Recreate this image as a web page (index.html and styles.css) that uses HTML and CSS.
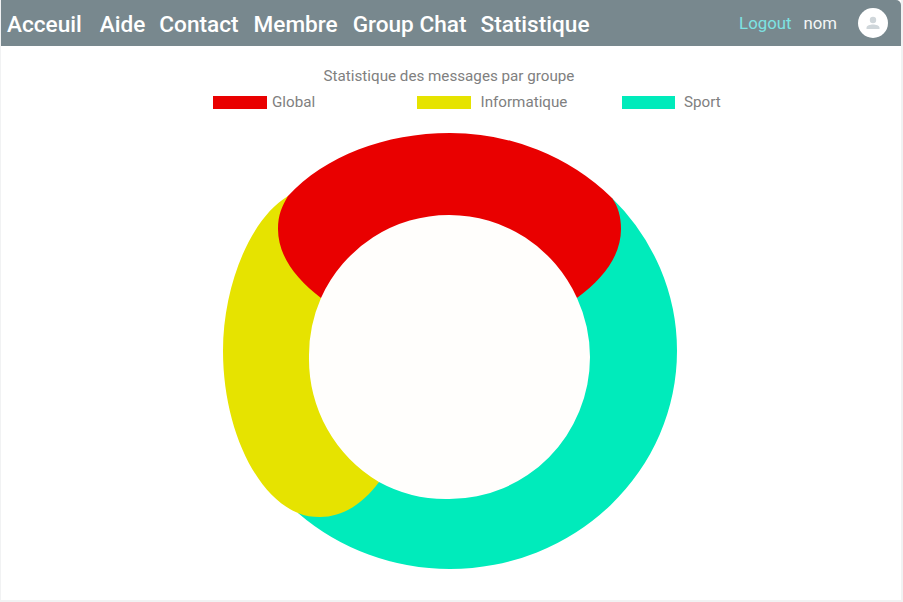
FILE: index.html
```html
<!doctype html>
<html>
<head>
  <meta charset="utf-8">
  <title>Statistique</title>
  <link rel="stylesheet" href="styles.css">
</head>
<body>
  <div class="page">
    <nav class="navbar">
      <a class="nav-link first" href="#">Acceuil</a>
      <a class="nav-link aide" href="#">Aide</a>
      <a class="nav-link" href="#">Contact</a>
      <a class="nav-link" href="#">Membre</a>
      <a class="nav-link chat" href="#">Group Chat</a>
      <a class="nav-link" href="#">Statistique</a>
      <div class="user">
        <a class="logout" href="#">Logout</a>
        <span class="name">nom</span>
        <span class="avatar">
          <svg width="16" height="16" viewBox="0 0 16 16">
            <circle cx="8" cy="5" r="3.2" fill="#cfd6da"/>
            <path d="M1.5 14v-1.2C1.5 10.6 5.2 9.6 8 9.6s6.5 1 6.5 3.2V14z" fill="#cfd6da"/>
          </svg>
        </span>
      </div>
    </nav>
    <main class="content">
      <h1 class="chart-title">Statistique des messages par groupe</h1>
      <ul class="legend">
        <li class="legend-item global"><span class="swatch red"></span>Global</li>
        <li class="legend-item info"><span class="swatch yellow"></span>Informatique</li>
        <li class="legend-item sport"><span class="swatch teal"></span>Sport</li>
      </ul>
      <svg class="donut" width="456" height="438" viewBox="222 131 456 438">
        <ellipse fill="#fffefc" cx="449.5" cy="356" rx="141" ry="142.5"/>
        <path fill="#00ebbb" d="M612 197A227 218 0 0 1 677 350A227 218 0 0 1 450 568A227 218 0 0 1 298 512L379 481A140.5 142 0 0 0 449.5 498A140.5 142 0 0 0 590 356A140.5 142 0 0 0 577 297Z"/>
        <path fill="#e6e300" d="M288 195C250 218 223 285 223 350C223 425 255 495 298 512C305 515 312 516 320 516C345 516 365 500 379 481A140.5 142 0 0 1 309 356A140.5 142 0 0 1 321 297Z"/>
        <path fill="#e90000" d="M288 195C325 155 385 132 450 132A227 218 0 0 1 612 197C618 205 621 216 621 228C621 255 603 278 577 297A140.5 142 0 0 0 449.5 214A140.5 142 0 0 0 321 297C296 278 278 255 278 228C278 214 282 205 288 195Z"/>
      </svg>
    </main>
  </div>
</body>
</html>
```

FILE: styles.css
```css
body {
  margin: 0;
  background: #f1f2f3;
  font-family: Roboto, "Liberation Sans", sans-serif;
}

.page {
  width: 900px;
  height: 600px;
  margin-left: 1px;
  background: #fff;
}

.navbar {
  display: flex;
  align-items: center;
  height: 46px;
  padding: 2px 13px 0 6px;
  box-sizing: border-box;
  background: #78888e;
  border-top-right-radius: 5px;
}

.nav-link {
  margin-right: 15px;
  font-size: 22.6px;
  font-weight: 500;
  color: #fff;
  text-decoration: none;
}
.nav-link.first { margin-right: 18px; }
.nav-link.aide { margin-right: 14px; }
.nav-link.chat { margin-right: 14px; }

.user {
  display: flex;
  align-items: center;
  margin-left: auto;
  margin-top: -2px;
}
.logout {
  font-size: 16.8px;
  color: #7de3e3;
  text-decoration: none;
}
.name {
  margin-left: 12px;
  font-size: 16.8px;
  color: #f4f6f6;
}
.avatar {
  display: flex;
  align-items: center;
  justify-content: center;
  width: 30px;
  height: 30px;
  margin-left: 21px;
  border-radius: 50%;
  background: #fff;
}

.content {
  display: flex;
  flex-direction: column;
  align-items: center;
  padding-right: 2px;
}

.chart-title {
  margin: 21px 2px 0 0;
  font-size: 15.2px;
  line-height: 18px;
  font-weight: 400;
  color: #808080;
}

.legend {
  display: flex;
  align-self: flex-start;
  margin: 8px 0 0 212px;
  padding: 0;
  list-style: none;
}
.legend-item {
  display: flex;
  align-items: center;
  font-size: 15.2px;
  line-height: 18px;
  color: #808080;
}
.global { width: 204px; }
.info { width: 204.5px; }
.swatch {
  width: 53.5px;
  height: 13px;
  margin-right: 5.5px;
}
.info .swatch { margin-right: 10px; }
.sport .swatch { margin-right: 9px; }
.red { background: #e90000; }
.yellow { background: #e6e300; }
.teal { background: #00ebbb; }

.donut {
  display: block;
  margin-top: 21px;
}
```
